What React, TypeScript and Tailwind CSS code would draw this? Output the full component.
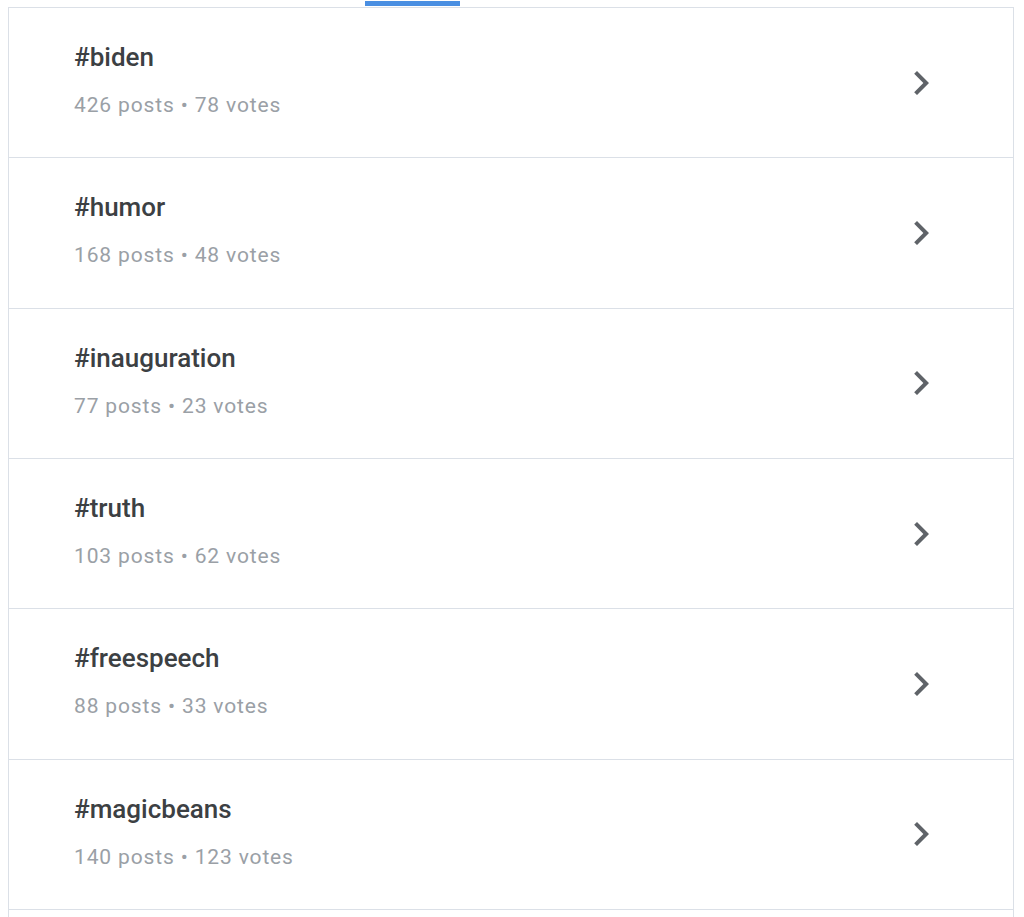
import React from "react";

const rows = [
  { tag: "#biden", posts: 426, votes: 78 },
  { tag: "#humor", posts: 168, votes: 48 },
  { tag: "#inauguration", posts: 77, votes: 23 },
  { tag: "#truth", posts: 103, votes: 62 },
  { tag: "#freespeech", posts: 88, votes: 33 },
  { tag: "#magicbeans", posts: 140, votes: 123 },
];

export default function App() {
  return (
    <div className="w-[1024px] h-[917px] overflow-hidden bg-white" style={{ fontFamily: "Roboto, 'Noto Sans', sans-serif" }}>
      <div className="h-[7px] pt-[1px] pl-[365px]">
        <div className="w-[95px] h-[5px] bg-[#4a8fe2]" />
      </div>
      <div className="ml-[8px] w-[1006px] border-x border-t border-[#dbe0e7]">
        {rows.map((r) => (
          <div
            key={r.tag}
            className="h-[150.33px] box-border border-b border-[#dbe0e7] flex items-center justify-between pl-[65px] pr-[68px]"
          >
            <div className="flex flex-col pb-[5px]">
              <div className="text-[26px] leading-[32px] font-medium text-[#3c4043]">{r.tag}</div>
              <div className="mt-[18px] text-[21px] leading-[28px] tracking-[0.85px] text-[#9aa0a6]">
                {r.posts} posts • {r.votes} votes
              </div>
            </div>
            <svg width="48" height="48" viewBox="0 0 24 24" className="text-[#5f6368]">
              <path d="M10 6L8.59 7.41 13.17 12l-4.58 4.59L10 18l6-6z" fill="currentColor" />
            </svg>
          </div>
        ))}
        <div className="h-[20px]" />
      </div>
    </div>
  );
}
